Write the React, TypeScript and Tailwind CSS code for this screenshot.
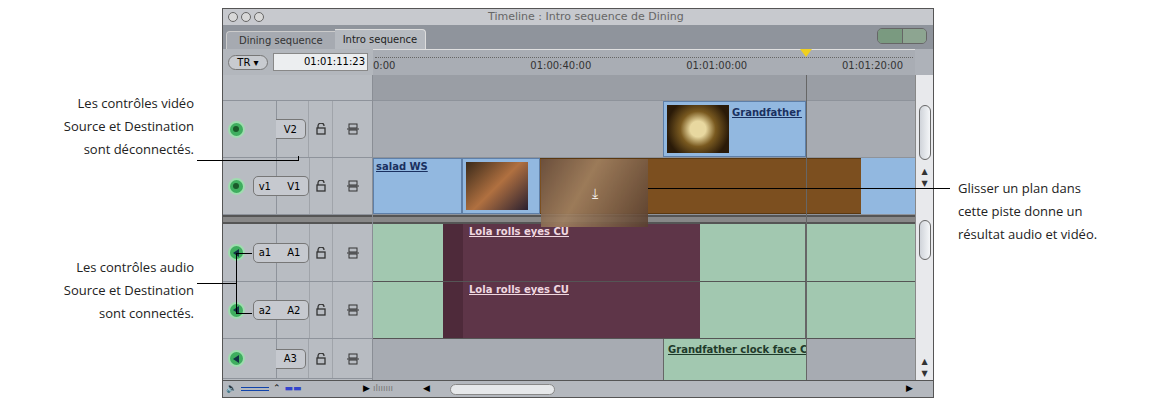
import React from "react";

const F = { fontFamily: '"Lucida Grande","DejaVu Sans",sans-serif' };

function Eye({ audio }: { audio?: boolean }) {
  return (
    <div className="w-[17px] h-[17px] rounded-full bg-[#3fae5f] border-2 border-[#9fdcaf] flex items-center justify-center">
      {audio ? <div className="w-0 h-0 border-y-[4px] border-y-transparent border-r-[6px] border-r-[#134]" /> : <div className="w-[6px] h-[6px] rounded-full bg-[#1a5a2a]" />}
    </div>
  );
}

function Lock() {
  return (
    <svg width="10" height="12" viewBox="0 0 10 12"><path d="M2 5V3a3 3 0 0 1 6 0" fill="none" stroke="#333" strokeWidth="1.3" /><rect x="1" y="5" width="8" height="6" fill="none" stroke="#333" strokeWidth="1.3" /></svg>
  );
}
function Sync() {
  return (
    <svg width="12" height="12" viewBox="0 0 12 12"><rect x="2" y="1" width="8" height="4" fill="none" stroke="#333" /><rect x="2" y="7" width="8" height="4" fill="none" stroke="#333" /><line x1="0" y1="6" x2="12" y2="6" stroke="#333" /></svg>
  );
}

function Header({ h, src, dst, audio }: { h: string; src?: string; dst: string; audio?: boolean }) {
  return (
    <div className={`flex ${h} border-b border-[#8e939b]`}>
      <div className="w-[27px] flex items-center justify-center"><Eye audio={audio} /></div>
      <div className="w-[59px] flex items-center pl-[3px] relative">
        <div className="absolute left-[26px] top-0 bottom-0 w-px bg-[#8e939b]" />
        {src ? <div className="relative w-[32px] h-[20px] rounded-l-[5px] border border-[#777] bg-[#c6c9cf] text-[10px] flex items-center pl-[5px]">{src}</div> : <div className="w-[27px]" />}
        <div className="relative w-[30px] h-[20px] rounded-r-[5px] border border-[#777] border-l-0 bg-[#c6c9cf] text-[10px] flex items-center justify-center ml-[-4px]">{dst}</div>
      </div>
      <div className="w-[24px] flex items-center justify-center border-l border-[#a0a4aa]"><Lock /></div>
      <div className="w-[40px] flex items-center justify-center border-l border-[#a0a4aa]"><Sync /></div>
    </div>
  );
}

export default function App() {
  const ann = "absolute text-[13px] leading-[23px] text-[#222]";
  const lbl = "text-[10px] underline font-bold whitespace-nowrap overflow-hidden";
  return (
    <div className="relative w-[1164px] h-[404px] bg-white overflow-hidden" style={{ fontFamily: '"Open Sans","Liberation Sans",sans-serif' }}>
      <div className="absolute left-[222px] top-[8px] w-[712px] h-[390px] bg-[#aeb2b9] border border-[#555] flex flex-col" style={F}>
        <div className="h-[16px] bg-[#c7c9ce] flex items-center px-[5px] relative">
          <div className="flex gap-[3px]">{[0, 1, 2].map(i => <div key={i} className="w-[10px] h-[10px] rounded-full border border-[#666] bg-[#d8d8d8]" />)}</div>
          <div className="absolute left-[265px] text-[11px] text-[#666]">Timeline : Intro sequence de Dining</div>
        </div>
        <div className="h-[24px] bg-[#8f949c] flex items-end px-[3px] relative">
          <div className="h-[18px] px-[12px] bg-[#a6aab1] text-[10px] flex items-center text-[#333] rounded-tl-[4px] border-t border-l border-[#ccc]">Dining sequence</div>
          <div className="h-[20px] px-[8px] bg-[#b6bac0] text-[10px] flex items-center text-[#222] rounded-tr-[4px] border-t border-r border-[#ddd]">Intro sequence</div>
          <div className="absolute right-[6px] top-[3px] flex h-[16px] border border-[#666] rounded-[5px] overflow-hidden">
            <div className="w-[24px] bg-[#7a9a80]" /><div className="w-[24px] bg-[#8da591] border-l border-[#666]" />
          </div>
        </div>
        <div className="h-[26px] flex">
          <div className="w-[150px] flex items-center gap-[5px] px-[5px] bg-[#b3b7bd]">
            <div className="w-[40px] h-[15px] rounded-full border border-[#777] bg-[#c8cbd0] text-[10px] flex items-center justify-center">TR ▾</div>
            <div className="flex-1 h-[18px] bg-[#eceef0] border border-[#888] text-[10px] text-right pr-[2px] leading-[16px]">01:01:11:23</div>
          </div>
          <div className="flex-1 bg-[#a9adb4] relative border-t border-[#e0e0e0]">
            <div className="h-[6px] border-b border-dotted border-[#666] mx-[2px] mt-[2px]" />
            <div className="flex text-[10px] text-[#333] justify-between pr-[12px]">
              <span>0:00</span><span className="ml-[40px]">01:00:40:00</span><span>01:01:00:00</span><span>01:01:20:00</span>
            </div>
            <div className="absolute left-[427px] top-[-1px] w-0 h-0 border-x-[6px] border-x-transparent border-t-[8px] border-t-[#f0d020]" />
          </div>
          <div className="w-[18px] bg-[#aeb2b9]" />
        </div>
        <div className="flex flex-1 relative">
          <div className="w-[150px] bg-[#b8bcc2] flex flex-col border-r border-[#8a8e95]">
            <div className="h-[26px] border-b border-[#8e939b]" />
            <Header h="h-[57px]" dst="V2" />
            <Header h="h-[57px]" src="v1" dst="V1" />
            <div className="h-[9px] bg-[#888] border-y-2 border-[#555]" />
            <Header h="h-[58px]" src="a1" dst="A1" audio />
            <Header h="h-[57px]" src="a2" dst="A2" audio />
            <Header h="h-[40px]" dst="A3" audio />
          </div>
          <div className="flex-1 flex flex-col bg-[#a7abb2] relative">
            <div className="h-[26px] bg-[#9a9ea5] border-b border-[#8e939b]" />
            <div className="h-[57px] flex border-b border-[#8e939b]">
              <div className="w-[290px]" />
              <div className="w-[143px] bg-[#92b8e0] border border-[#5e7fa8] flex items-start p-[3px] gap-[3px] overflow-hidden">
                <div className="w-[62px] h-[48px] shrink-0 bg-[radial-gradient(circle,#e8d8a0_20%,#7a5a20_45%,#2a1a08_80%)]" />
                <span className={`${lbl} text-[#1a3060]`}>Grandfather c</span>
              </div>
            </div>
            <div className="h-[57px] flex border-b border-[#8e939b]">
              <div className={`w-[89px] bg-[#92b8e0] border border-[#5e7fa8] ${lbl} text-[#1a3060] pl-[2px]`}>salad WS</div>
              <div className="w-[78px] bg-[#92b8e0] border border-[#5e7fa8] p-[3px] flex gap-[3px]">
                <div className="w-[62px] h-[48px] bg-[linear-gradient(135deg,#3a2a1a,#b07040_50%,#2a2030)]" />
              </div>
              <div className="w-[321px] bg-[#7c4f1f] border-y border-[#5a3810]" />
              <div className="flex-1 bg-[#92b8e0]" />
            </div>
            <div className="h-[9px] bg-[#888] border-y-2 border-[#555]" />
            {[0, 1].map(i => (
              <div key={i} className={`${i ? "h-[57px]" : "h-[58px]"} flex border-b border-[#555]`}>
                <div className="w-[70px] bg-[#a2c8b0]" />
                <div className={`w-[257px] bg-[#5e3548] border-l-[20px] border-[#4e2a3a] ${lbl} text-[#f0d8e0] pl-[6px]`}>Lola rolls eyes CU</div>
                <div className="w-[106px] bg-[#a2c8b0] border-r border-[#666]" />
                <div className="flex-1 bg-[#a2c8b0]" />
              </div>
            ))}
            <div className="flex-1 flex">
              <div className="w-[290px]" />
              <div className={`w-[143px] bg-[#a2c8b0] border-l border-[#666] ${lbl} text-[#1f3a2a] pl-[4px] pt-[3px]`}>Grandfather clock face CU</div>
            </div>
            <div className="absolute left-[433px] top-0 bottom-0 w-px bg-[#666]" />
            <div className="absolute left-[168px] top-[84px] w-[107px] h-[68px] bg-[linear-gradient(120deg,#6a5040,#a08060_40%,#5a4030)] opacity-90 flex items-center justify-center text-white text-[14px]">⤓</div>
          </div>
          <div className="w-[18px] bg-[#e8e9ec] border-l border-[#888] flex flex-col items-center text-[8px] text-[#333]">
            <div className="mt-[30px] w-[12px] h-[55px] rounded-full border border-[#666] bg-[linear-gradient(90deg,#d0d4da,#f4f6f8)]" />
            <div className="mt-[6px]">▲</div><div>▼</div>
            <div className="mt-[30px] w-[12px] h-[40px] rounded-full border border-[#666] bg-[linear-gradient(90deg,#d0d4da,#f4f6f8)]" />
            <div className="mt-auto">▲</div><div>▼</div>
          </div>
        </div>
        <div className="h-[17px] bg-[#b4b8be] border-t border-[#555] flex items-center text-[9px]">
          <div className="w-[150px] flex items-center gap-[4px] px-[3px]">🔈<div className="w-[28px] h-[4px] border-y border-[#14a]" /><span>⌃</span><span className="text-[#34c]">▬▬</span><span className="ml-auto">▶</span></div>
          <div className="w-[50px] text-[#777]">ılıııııı</div>
          <span>◀</span>
          <div className="ml-[20px] w-[105px] h-[11px] rounded-full bg-[#e6e8ea] border border-[#888]" />
          <div className="ml-auto mr-[20px]">▶</div>
        </div>
      </div>
      <div className={`${ann} right-[970px] top-[92px] text-right whitespace-nowrap`}>Les contrôles vidéo<br />Source et Destination<br />sont déconnectés.</div>
      <div className="absolute left-[197px] top-[160px] w-[102px] h-px bg-black" />
      <div className="absolute left-[298px] top-[156px] w-px h-[5px] bg-black" />
      <div className={`${ann} right-[970px] top-[256px] text-right whitespace-nowrap`}>Les contrôles audio<br />Source et Destination<br />sont connectés.</div>
      <div className="absolute left-[197px] top-[283px] w-[39px] h-px bg-black" />
      <div className="absolute left-[236px] top-[253px] w-px h-[61px] bg-black" />
      <div className="absolute left-[236px] top-[253px] w-[16px] h-px bg-black" />
      <div className="absolute left-[236px] top-[313px] w-[16px] h-px bg-black" />
      <div className="absolute left-[648px] top-[188px] w-[302px] h-px bg-black" />
      <div className={`${ann} left-[958px] top-[177px] whitespace-nowrap`}>Glisser un plan dans<br />cette piste donne un<br />résultat audio et vidéo.</div>
    </div>
  );
}
